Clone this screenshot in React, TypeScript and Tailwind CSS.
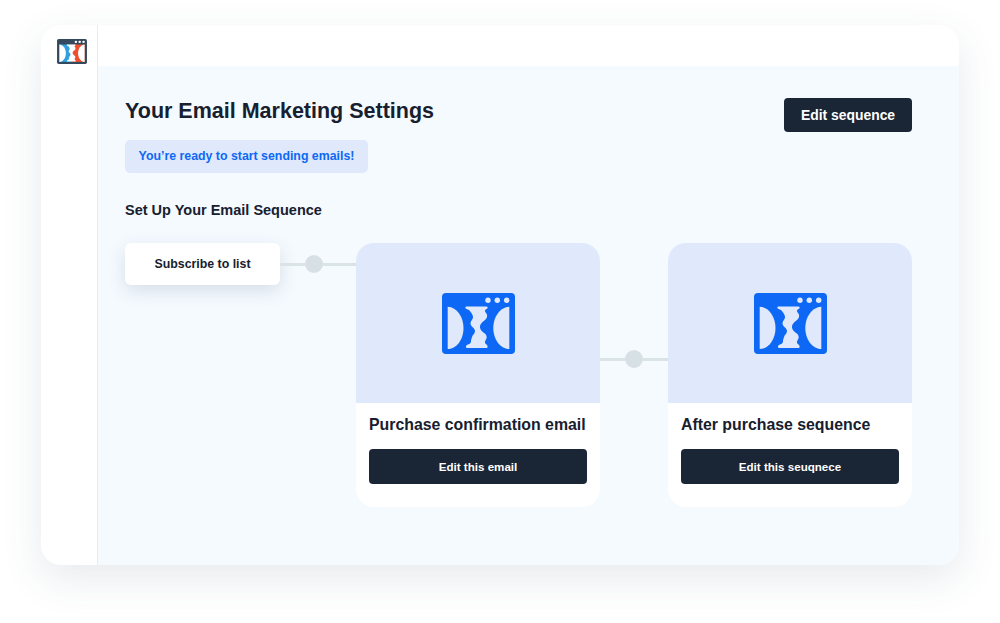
const wave = "M24.5 13.5 H44.5 C46 13.5 46 15.5 44.5 16 C42.5 16.8 42.5 18.5 44 20 C45.5 21.5 45.5 24 44 26 C41.5 28.5 38.5 30 38 33 C37.5 36 39.5 38 42 40 C44.5 41.5 45.5 44 44 46.5 C42.5 48.5 42.5 50.5 44.5 51.5 C46 52.5 46 55 44.5 55 H25 C23.5 55 23.5 52.5 25 52 C27 51 29 50.5 29 48.5 C29 46.5 29.5 46 30 44 C30.5 42 33 40.5 33 38 C33 35 28.5 33.5 28.5 30.5 C28.5 27.5 31 26.5 31 24.5 C31 22 30 21 29 19.5 C28 17.5 26.5 16.5 24.5 16 C23 15.5 23 13.5 24.5 13.5 Z";
const leftShape = "M5.7 13.7 C15 14 21.5 24 21.5 35 C21.5 46 15 56 5.7 56 Z";
const rightShape = "M67.3 13.7 C58 14 51.3 24 51.3 35 C51.3 46 58 56 67.3 56 Z";

function BlueLogo() {
  return (
    <svg width="73" height="61" viewBox="0 0 73 61">
      <rect width="73" height="61" rx="4" fill="#0d68f5" />
      <circle cx="46" cy="7.3" r="2.7" fill="#dfe9fb" />
      <circle cx="55.3" cy="7.3" r="2.7" fill="#dfe9fb" />
      <circle cx="64.7" cy="7.3" r="2.7" fill="#dfe9fb" />
      <path d={leftShape} fill="#dfe9fb" />
      <path d={rightShape} fill="#dfe9fb" />
      <path d={wave} fill="#dfe9fb" />
    </svg>
  );
}

function SmallLogo() {
  return (
    <svg width="30" height="25" viewBox="0 0 73 61">
      <rect width="73" height="61" rx="4" fill="#34495e" />
      <circle cx="46" cy="7" r="3" fill="#fff" />
      <circle cx="55.3" cy="7" r="3" fill="#fff" />
      <circle cx="64.7" cy="7" r="3" fill="#fff" />
      <rect x="5.7" y="13.5" width="30.8" height="42.5" fill="#2f9fe0" />
      <rect x="36.5" y="13.5" width="30.8" height="42.5" fill="#ee4f2c" />
      <path d={leftShape} fill="#fff" />
      <path d={rightShape} fill="#fff" />
      <path d={wave} fill="#fff" />
    </svg>
  );
}

function Connector({ className, leftClass }: { className: string; leftClass: string }) {
  return (
    <div className={`flex items-center shrink-0 ${className}`}>
      <div className={`h-[3px] bg-[#dae3e6] ${leftClass}`} />
      <div className="w-[18px] h-[18px] rounded-full bg-[#d7e0e4] shrink-0" />
      <div className="h-[3px] grow bg-[#dae3e6]" />
    </div>
  );
}

function Card({ title, action }: { title: string; action: string }) {
  return (
    <div className="w-[244px] h-[264px] shrink-0 rounded-[18px] bg-white overflow-hidden flex flex-col">
      <div className="h-[160px] bg-[#dfe9fb] flex items-center justify-center">
        <BlueLogo />
      </div>
      <div className="px-[13px] pt-[11px]">
        <div className="text-[15.85px] leading-[22px] font-bold whitespace-nowrap text-[#17202e]">{title}</div>
        <div className="mt-[13px] h-[35px] rounded-[4px] bg-[#1a2535] text-white text-[11.6px] font-bold flex items-center justify-center">
          {action}
        </div>
      </div>
    </div>
  );
}

export default function App() {
  return (
    <div className="w-[1000px] h-[623px] bg-white pt-[25px] pl-[41px] font-['Liberation_Sans',Arial,sans-serif]">
      <div className="w-[918px] h-[540px] rounded-[20px] overflow-hidden bg-white shadow-[0_14px_40px_rgba(60,80,110,0.12)] flex">
        <div className="w-[57px] shrink-0 border-r border-[#e9ecef] pt-[14px] pl-[16px]">
          <SmallLogo />
        </div>
        <div className="grow flex flex-col">
          <div className="h-[41px] shrink-0 bg-white" />
          <div className="grow bg-[#f5faff] pl-[27px] pr-[47px] pt-[32px]">
            <div className="flex justify-between items-start">
              <div>
                <h1 className="text-[21.5px] leading-[27px] font-bold text-[#17202e]">Your Email Marketing Settings</h1>
                <div className="mt-[15px] w-[243px] h-[33px] rounded-[5px] bg-[#dfe9fb] flex items-center justify-center text-[12.35px] font-bold text-[#0d68f5]">
                  You’re ready to start sending emails!
                </div>
              </div>
              <div className="w-[128px] h-[34px] pt-[1px] rounded-[4px] bg-[#1a2535] text-white text-[13.9px] font-bold flex items-center justify-center">
                Edit sequence
              </div>
            </div>
            <div className="mt-[27px] text-[14.5px] leading-[20px] font-bold text-[#17202e]">Set Up Your Email Sequence</div>
            <div className="mt-[23px] flex items-start">
              <div className="w-[155px] h-[42px] shrink-0 rounded-[6px] bg-white shadow-[0_6px_18px_rgba(60,80,110,0.16)] flex items-center justify-center text-[12.35px] font-bold text-[#17202e]">
                Subscribe to list
              </div>
              <Connector className="mt-[12px] w-[76px]" leftClass="w-[25px]" />
              <Card title="Purchase confirmation email" action="Edit this email" />
              <Connector className="mt-[107px] w-[68px]" leftClass="w-[25px]" />
              <Card title="After purchase sequence" action="Edit this seuqnece" />
            </div>
          </div>
        </div>
      </div>
    </div>
  );
}
